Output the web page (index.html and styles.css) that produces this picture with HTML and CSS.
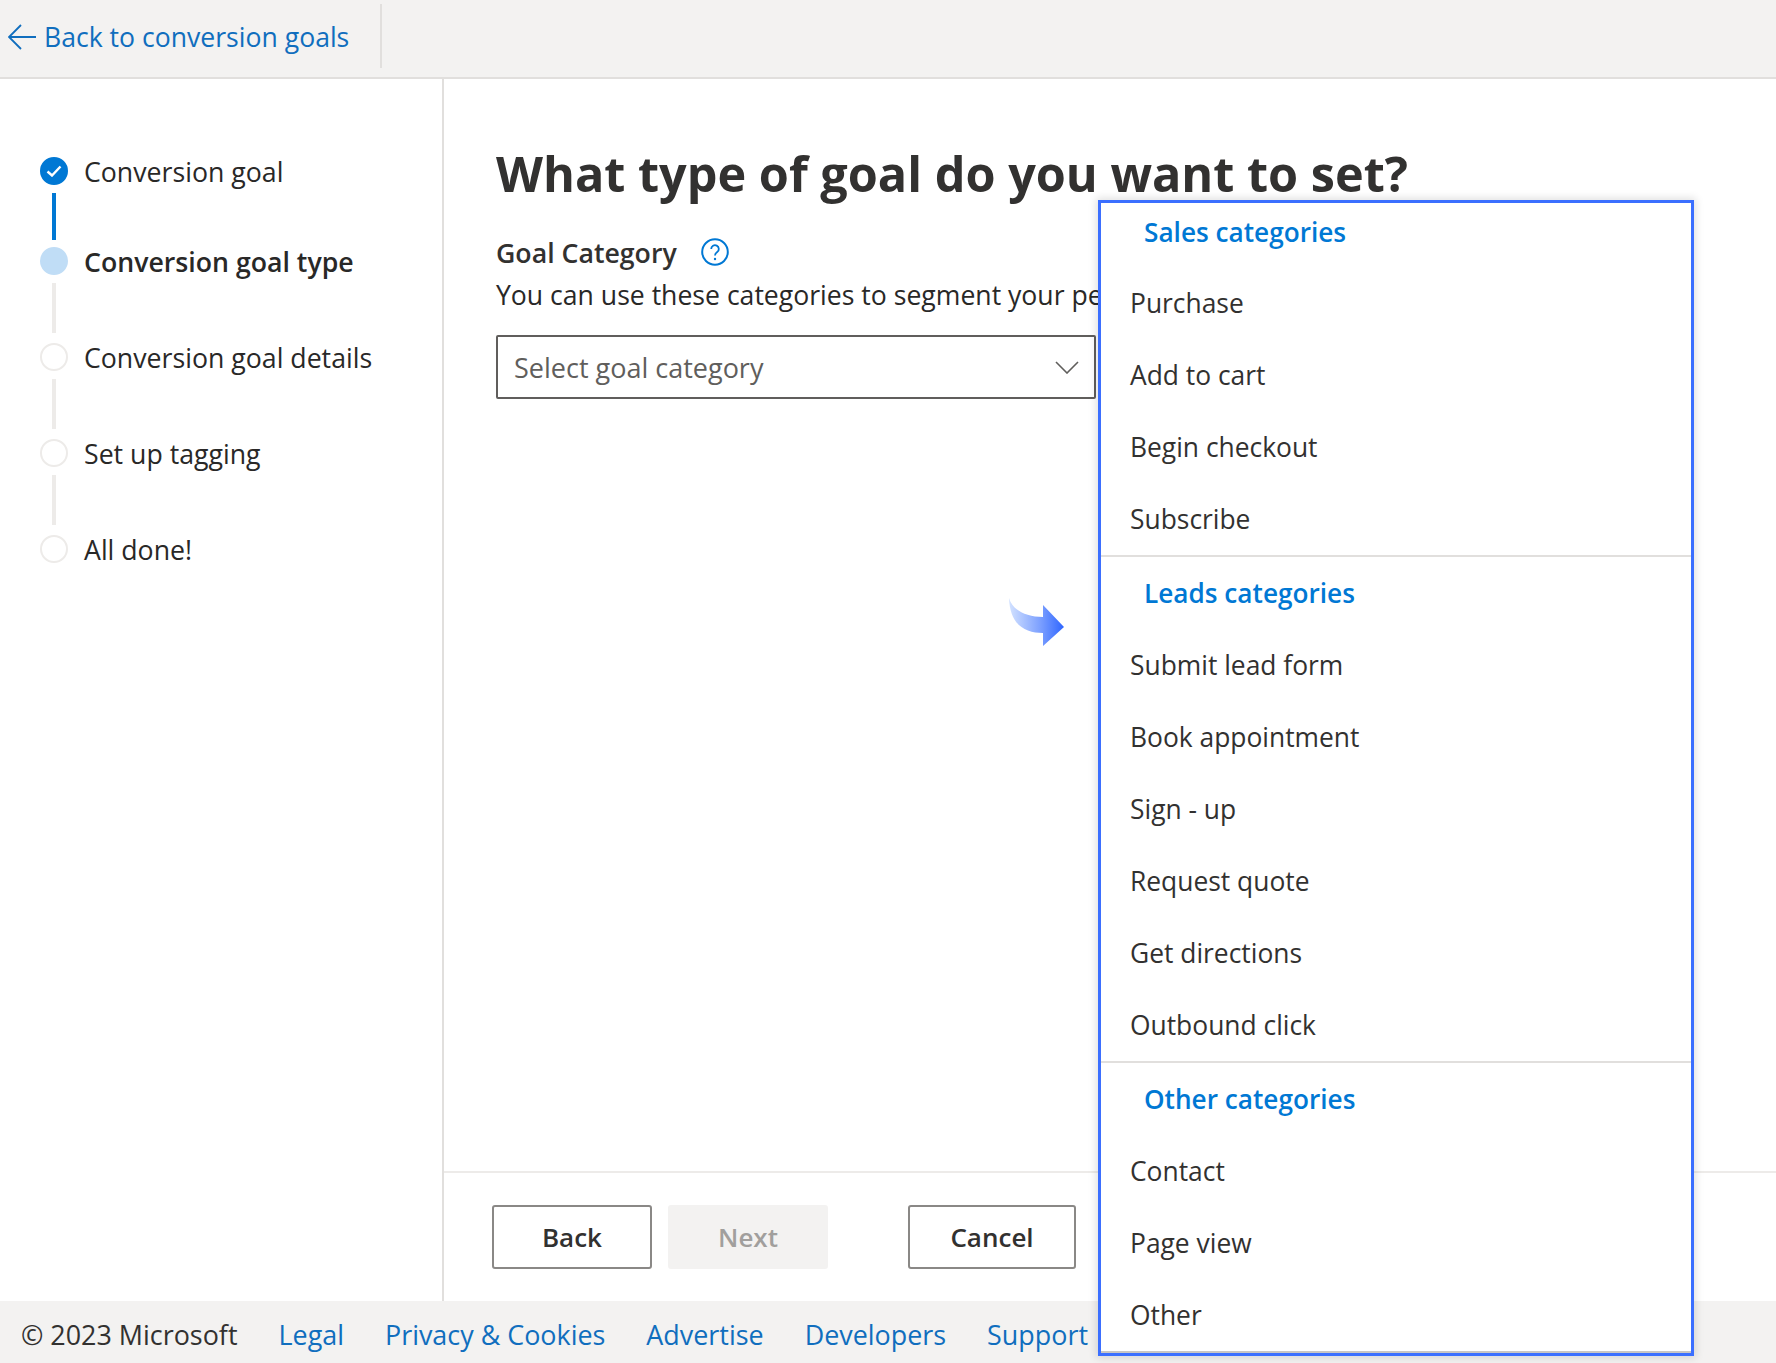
FILE: index.html
```html
<!DOCTYPE html>
<html lang="en">
<head>
<meta charset="utf-8">
<title>Conversion goal</title>
<link rel="stylesheet" href="styles.css">
</head>
<body>
<header class="topbar">
  <a class="back-link" href="#">
    <svg class="back-icon" width="28" height="26" viewBox="0 0 28 26"><path d="M13 1 1 13l12 12M1 13h27" fill="none" stroke="#106ebe" stroke-width="1.8"/></svg>
    <span>Back to conversion goals</span>
  </a>
  <span class="topbar-divider"></span>
</header>
<div class="middle">
  <nav class="steps">
    <div class="step"><span class="dot dot-done"><svg width="16" height="12" viewBox="0 0 16 12"><path d="M1.5 6.5 6 10.5 14.5 1.5" fill="none" stroke="#fff" stroke-width="2.4"/></svg></span><span class="step-label">Conversion goal</span></div>
    <span class="link link-done"></span>
    <div class="step"><span class="dot dot-current"></span><span class="step-label step-label-current">Conversion goal type</span></div>
    <span class="link"></span>
    <div class="step"><span class="dot"></span><span class="step-label">Conversion goal details</span></div>
    <span class="link"></span>
    <div class="step"><span class="dot"></span><span class="step-label">Set up tagging</span></div>
    <span class="link"></span>
    <div class="step"><span class="dot"></span><span class="step-label">All done!</span></div>
  </nav>
  <main class="content">
    <div class="form">
      <h1 class="title">What type of goal do you want to set?</h1>
      <div class="field-head">
        <span class="field-label">Goal Category</span>
        <svg class="help" width="28" height="28" viewBox="0 0 28 28"><circle cx="14" cy="14" r="12.8" fill="none" stroke="#0078d4" stroke-width="2"/><path d="M10.2 11a3.8 3.8 0 1 1 6 3.1c-1.4 1-2.2 1.7-2.2 3.4" fill="none" stroke="#0078d4" stroke-width="1.8"/><circle cx="14" cy="21" r="1.2" fill="#0078d4"/></svg>
      </div>
      <p class="field-desc">You can use these categories to segment your performance reporting.</p>
      <div class="select">
        <span>Select goal category</span>
        <svg width="24" height="13" viewBox="0 0 24 13"><path d="M1 1l11 11L23 1" fill="none" stroke="#605e5c" stroke-width="1.6"/></svg>
      </div>
    </div>
    <div class="actions">
      <button class="btn btn-back">Back</button>
      <button class="btn btn-next" disabled>Next</button>
      <button class="btn btn-cancel">Cancel</button>
    </div>
  </main>
</div>
<footer class="footer">
  <span class="copy">© 2023 Microsoft</span>
  <a href="#">Legal</a>
  <a href="#">Privacy &amp; Cookies</a>
  <a href="#">Advertise</a>
  <a href="#">Developers</a>
  <a href="#">Support</a>
</footer>

<svg class="callout-arrow" width="56" height="48" viewBox="0 0 56 48">
  <defs><linearGradient id="arrowfill" x1="0" x2="1" y1="0" y2="0"><stop offset="0" stop-color="#d3e2ff"/><stop offset="0.55" stop-color="#7fa2ff"/><stop offset="1" stop-color="#2f66ff"/></linearGradient></defs>
  <path d="M1 0C4 12 18 19 35 19V7L56 29 35 48V35C18 35 2 28 1 0Z" fill="url(#arrowfill)"/>
</svg>

<div class="menu">
  <div class="menu-head menu-head-first">Sales categories</div>
  <div class="menu-item">Purchase</div>
  <div class="menu-item">Add to cart</div>
  <div class="menu-item">Begin checkout</div>
  <div class="menu-item">Subscribe</div>
  <div class="menu-head menu-head-rule">Leads categories</div>
  <div class="menu-item">Submit lead form</div>
  <div class="menu-item">Book appointment</div>
  <div class="menu-item">Sign - up</div>
  <div class="menu-item">Request quote</div>
  <div class="menu-item">Get directions</div>
  <div class="menu-item">Outbound click</div>
  <div class="menu-head menu-head-rule">Other categories</div>
  <div class="menu-item">Contact</div>
  <div class="menu-item">Page view</div>
  <div class="menu-item">Other</div>
</div>
</body>
</html>
```

FILE: styles.css
```css
* { box-sizing: border-box; }
html, body { margin: 0; height: 100%; }
body {
  height: 1363px;
  overflow: hidden;
  display: flex;
  flex-direction: column;
  position: relative;
  background: #fff;
  color: #323130;
  font-family: "Open Sans", "Noto Sans", sans-serif;
  font-size: 26.5px;
}
a { color: #106ebe; text-decoration: none; }

.topbar {
  height: 79px;
  flex: none;
  display: flex;
  background: #f3f2f1;
  border-bottom: 2px solid #e1dfdd;
}
.back-link {
  width: 380px;
  padding-left: 8px;
  display: flex;
  align-items: center;
  gap: 8px;
  font-size: 26.6px;
}
.back-link span { position: relative; top: -2px; }
.back-icon { flex: none; position: relative; top: -2px; }
.topbar-divider { width: 2px; height: 64px; margin-top: 4px; background: #e1dfdd; }

.middle { flex: 1; display: flex; min-height: 0; }
.steps {
  width: 444px;
  flex: none;
  padding: 78px 0 0 40px;
  border-right: 2px solid #e1dfdd;
  display: flex;
  flex-direction: column;
}
.step { height: 28px; display: flex; align-items: center; gap: 16px; white-space: nowrap; font-size: 26.7px; color: #292827; }
.dot {
  width: 28px;
  height: 28px;
  flex: none;
  border-radius: 50%;
  border: 2px solid #edebe9;
  display: flex;
  align-items: center;
  justify-content: center;
}
.dot-done { background: #0078d4; border-color: #0078d4; }
.dot-current { background: #c0ddf6; border-color: #c0ddf6; }
.step-label-current { font-weight: 600; }
.link { width: 4px; height: 50px; margin: 8px 0 10px 12px; background: #edebe9; }
.link-done { height: 47px; margin: 8px 0 7px 12px; background: #0078d4; }

.content { flex: 1; min-width: 0; display: flex; flex-direction: column; }
.form { flex: 1; padding: 60px 0 0 52px; overflow: hidden; }
.title { margin: 0; font-size: 48.6px; line-height: 68px; font-weight: 700; color: #323130; white-space: nowrap; }
.field-head { margin-top: 27px; height: 36px; display: flex; align-items: center; gap: 24px; }
.field-label { font-weight: 600; font-size: 26.7px; }
.field-desc { margin: 7px 0 0; line-height: 36px; white-space: nowrap; font-size: 26.6px; color: #292827; }
.select {
  width: 600px;
  height: 64px;
  margin-top: 22px;
  padding: 0 15px 0 16px;
  border: 2px solid #605e5c;
  border-radius: 2px;
  display: flex;
  align-items: center;
  justify-content: space-between;
  color: #605e5c;
  font-size: 27px;
}
.actions {
  height: 130px;
  flex: none;
  border-top: 2px solid #edebe9;
  padding: 32px 0 0 48px;
  display: flex;
  align-items: flex-start;
}
.btn {
  width: 160px;
  height: 64px;
  border: 2px solid #8a8886;
  border-radius: 3px;
  background: #fff;
  color: #323130;
  font-family: inherit;
  font-size: 26px;
  font-weight: 600;
  padding: 0;
}
.btn-next { margin-left: 16px; background: #f3f2f1; border-color: #f3f2f1; color: #a19f9d; }
.btn-cancel { margin-left: 80px; width: 168px; }

.footer {
  height: 62px;
  flex: none;
  background: #f3f2f1;
  padding: 4px 0 0 21px;
  display: flex;
  align-items: center;
  gap: 41px;
  font-size: 26.9px;
  white-space: nowrap;
}
.copy { color: #323130; }

.callout-arrow { position: absolute; left: 1008px; top: 598px; }
.menu {
  position: absolute;
  left: 1098px;
  top: 200px;
  width: 596px;
  height: 1156px;
  background: #fff;
  border: 3px solid #3b6fff;
  box-shadow: 0 0 8px 2px rgba(0, 0, 0, .12), inset 0 -2px 0 #c8c6c4;
  font-size: 26.4px;
  color: #323130;
}
.menu-item { height: 72px; line-height: 72px; padding-left: 29px; }
.menu-head { height: 74px; line-height: 72px; padding-left: 43px; color: #0078d4; font-weight: 600; font-size: 26.2px; }
.menu-head-first { height: 64px; line-height: 58px; }
.menu-head-rule { border-top: 2px solid #e1dfdd; }
```
